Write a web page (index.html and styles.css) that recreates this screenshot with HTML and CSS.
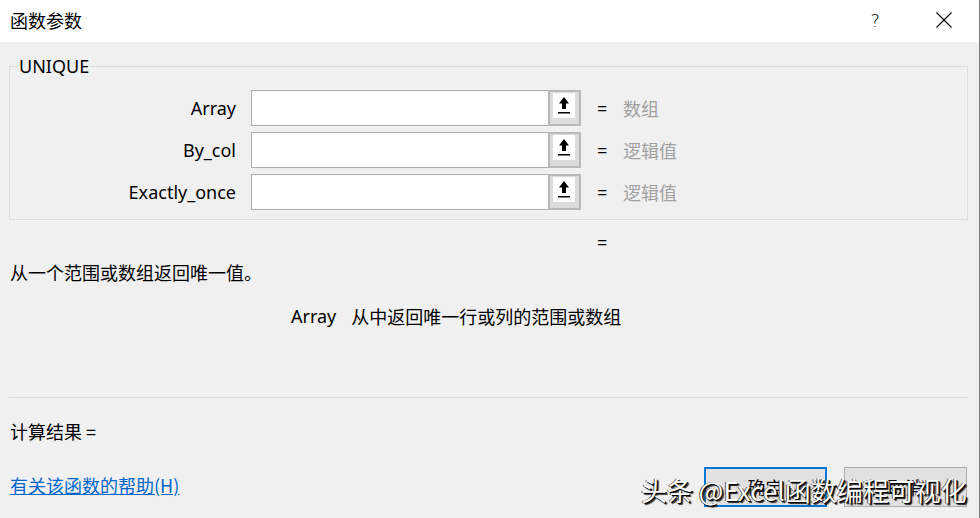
FILE: index.html
```html
<!DOCTYPE html>
<html lang="zh-CN">
<head>
<meta charset="utf-8">
<title>函数参数</title>
<link rel="stylesheet" href="styles.css">
</head>
<body>
<div class="dialog">
  <div class="titlebar">
    <div class="title">函数参数</div>
    <div class="title-tools">
      <span class="help">?</span>
      <svg class="close" width="16" height="16" viewBox="0 0 16 16"><path d="M0.5 0.5 L15.5 15.5 M15.5 0.5 L0.5 15.5" stroke="#000" stroke-width="1.1" fill="none"/></svg>
    </div>
  </div>
  <div class="body">
    <fieldset class="group">
      <legend>UNIQUE</legend>
      <div class="arg-row">
        <label class="arg-label">Array</label>
        <div class="arg-input"></div>
        <div class="ref-btn"><div class="ref-inner"><svg width="14" height="19" viewBox="0 0 14 19"><path d="M7 1 L12 7.5 L9 7.5 L9 13 L5 13 L5 7.5 L2 7.5 Z" fill="#000"/><rect x="1" y="16" width="12" height="1.5" fill="#000"/></svg></div></div>
        <span class="eq">=</span>
        <span class="arg-value">数组</span>
      </div>
      <div class="arg-row">
        <label class="arg-label">By_col</label>
        <div class="arg-input"></div>
        <div class="ref-btn"><div class="ref-inner"><svg width="14" height="19" viewBox="0 0 14 19"><path d="M7 1 L12 7.5 L9 7.5 L9 13 L5 13 L5 7.5 L2 7.5 Z" fill="#000"/><rect x="1" y="16" width="12" height="1.5" fill="#000"/></svg></div></div>
        <span class="eq">=</span>
        <span class="arg-value">逻辑值</span>
      </div>
      <div class="arg-row">
        <label class="arg-label">Exactly_once</label>
        <div class="arg-input"></div>
        <div class="ref-btn"><div class="ref-inner"><svg width="14" height="19" viewBox="0 0 14 19"><path d="M7 1 L12 7.5 L9 7.5 L9 13 L5 13 L5 7.5 L2 7.5 Z" fill="#000"/><rect x="1" y="16" width="12" height="1.5" fill="#000"/></svg></div></div>
        <span class="eq">=</span>
        <span class="arg-value">逻辑值</span>
      </div>
    </fieldset>
    <div class="result-eq">=</div>
    <div class="desc">从一个范围或数组返回唯一值。</div>
    <div class="arg-help"><span class="arg-help-name">Array</span><span>从中返回唯一行或列的范围或数组</span></div>
    <div class="separator"></div>
    <div class="calc">计算结果 =</div>
    <div class="footer">
      <a class="help-link" href="#">有关该函数的帮助(H)</a>
      <div class="buttons">
        <button class="btn btn-primary">确定</button>
        <button class="btn">取消</button>
      </div>
    </div>
  </div>
  <div class="watermark">头条 @Excel函数编程可视化</div>
</div>
</body>
</html>
```

FILE: styles.css
```css
* { box-sizing: border-box; }
html, body {
  margin: 0;
  padding: 0;
  width: 980px;
  height: 518px;
  overflow: hidden;
  background: #f0f0f0;
}
body {
  font-family: "Noto Sans", "Noto Sans CJK SC", sans-serif;
  font-size: 18px;
  color: #000;
}
.dialog {
  position: relative;
  width: 980px;
  height: 518px;
  background: #f0f0f0;
  border-right: 1px solid #7a7a7a;
}
.titlebar {
  height: 42px;
  background: #fff;
  display: flex;
  align-items: center;
  justify-content: space-between;
  padding: 0 0 2px 10px;
}
.title {
  font-family: "Noto Sans CJK SC", sans-serif;
  font-size: 18px;
  color: #000;
}
.title-tools {
  display: flex;
  align-items: center;
}
.help {
  font-family: "DejaVu Sans", sans-serif;
  font-weight: 200;
  font-size: 18px;
  margin-right: 56px;
}
.close {
  margin-right: 27px;
}
.body {
  padding: 14px 11px 0 9px;
}
.group {
  margin: 0;
  padding: 14px 0 9px 0;
  border: 1px solid #dcdcdc;
  display: flex;
  flex-direction: column;
  gap: 6px;
}
.group legend {
  font-size: 18px;
  padding: 0 1px;
  margin-left: 8px;
  line-height: 20px;
}
.arg-row {
  display: flex;
  align-items: center;
  height: 36px;
}
.arg-label {
  width: 226px;
  text-align: right;
  margin-right: 15px;
}
.arg-input {
  width: 298px;
  height: 36px;
  background: #fff;
  border: 1px solid #adadad;
}
.ref-btn {
  width: 33px;
  height: 36px;
  margin-left: -1px;
  border: 2px solid #b9b9b9;
  background: #dcdcdc;
  padding: 1px 3px 0 3px;
}
.ref-inner {
  width: 22px;
  height: 25px;
  background: #fff;
  display: flex;
  align-items: center;
  justify-content: center;
}
.eq {
  margin-left: 16px;
  width: 26px;
}
.arg-value {
  color: #a0a0a0;
  font-family: "Noto Sans CJK SC", sans-serif;
}
.result-eq {
  margin-top: 10px;
  padding-left: 588px;
  height: 24px;
  line-height: 24px;
}
.desc {
  margin-top: 6px;
  padding-left: 1px;
  font-family: "Noto Sans CJK SC", sans-serif;
  line-height: 24px;
}
.arg-help {
  margin-top: 20px;
  padding-left: 282px;
  line-height: 24px;
  display: flex;
}
.arg-help-name {
  margin-right: 15px;
}
.arg-help span:last-child {
  font-family: "Noto Sans CJK SC", sans-serif;
}
.separator {
  margin-top: 69px;
  height: 1px;
  background: #dadada;
}
.calc {
  margin-top: 21px;
  padding-left: 1px;
  line-height: 24px;
  font-family: "Noto Sans CJK SC", sans-serif;
}
.footer {
  margin-top: 24px;
  display: flex;
  justify-content: space-between;
  align-items: flex-start;
  padding-left: 1px;
  padding-right: 1px;
}
.help-link {
  margin-top: 6px;
  color: #0066cc;
  text-decoration: underline;
  font-family: "Noto Sans CJK SC", sans-serif;
  line-height: 24px;
}
.buttons {
  display: flex;
  gap: 17px;
}
.btn {
  width: 123px;
  height: 40px;
  background: #e1e1e1;
  border: 1px solid #adadad;
  font-family: "Noto Sans CJK SC", sans-serif;
  font-size: 18px;
  color: #000;
  padding: 0;
}
.btn-primary {
  border: 2px solid #0078d7;
}
.watermark {
  position: absolute;
  left: 641px;
  top: 473px;
  font-family: "Noto Sans CJK SC", sans-serif;
  font-size: 26px;
  line-height: 34px;
  color: #fff;
  white-space: nowrap;
  text-shadow: 1px 1px 0 #000, 2px 2px 1px #222, -1px 0 0 #555;
}
```
